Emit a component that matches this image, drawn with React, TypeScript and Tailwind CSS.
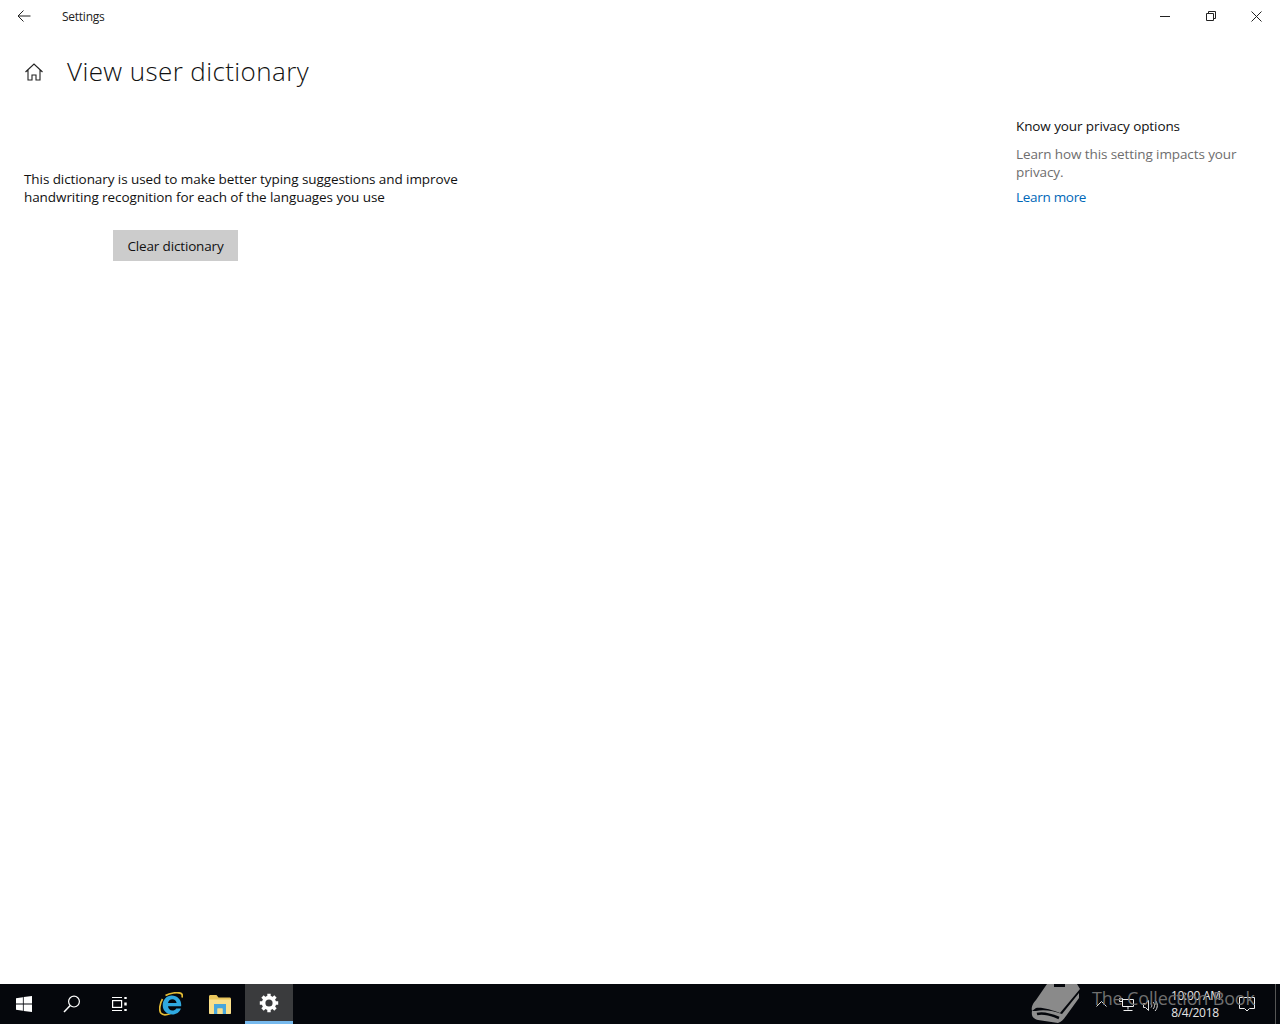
import React from "react";

const font = "font-['Open_Sans','Noto_Sans',sans-serif]";

function Windows() {
  return (
    <svg width="16" height="16" viewBox="0 0 16 16" fill="#fff">
      <path d="M0 2.300 6.900 1.200V7.600H0zM7.700 1.100 16 0V7.600H7.700zM0 8.400H6.900V14.800L0 13.700zM7.700 8.400H16V16L7.700 14.900z" />
    </svg>
  );
}
function Search() {
  return (
    <svg width="18" height="18" viewBox="0 0 18 18" fill="none" stroke="#fff" strokeWidth="1.200">
      <circle cx="11" cy="6.600" r="5.400" />
      <path d="M7.200 10.500 1 17" strokeWidth="1.500" />
    </svg>
  );
}
function TaskView() {
  return (
    <svg width="18" height="16" viewBox="0 0 18 16" fill="none" stroke="#fff" strokeWidth="1.200">
      <path d="M1 1.500H11M1 14.500H11" />
      <rect x="1.600" y="4.600" width="9" height="6.800" />
      <path d="M14.500 1V3M14.500 6.500V9.500M14.500 13V15" strokeWidth="2.400" />
    </svg>
  );
}
function IE() {
  return (
    <svg width="24" height="24" viewBox="0 0 24 24">
      <path d="M3.500 7C.8 11.500 -.2 18 1.800 21c2 2.600 6 2 9.700.5" fill="none" stroke="#e3bb34" strokeWidth="1.700" />
      <path d="M6.500 3.400C11 .9 18 .2 21.300 1.100c1.900.6 2.300 2.400 1.700 4.400" fill="none" stroke="#e3bb34" strokeWidth="1.700" />
      <path
        d="M12.800 3.400c5.400 0 9.400 4 9.400 9.200v1.700H9c.3 2.700 2 4.200 4.300 4.200 1.800 0 3.100-.7 3.900-2.100h4.700c-1.200 3.800-4.600 6-8.600 6-5.500 0-9.600-3.800-9.600-9.200 0-5.700 4-9.800 9.100-9.800zm-3.800 7.500h8.600c-.3-2.300-2-3.700-4.300-3.700-2.200 0-3.900 1.400-4.300 3.700z"
        fill="#2fa9e0"
        fillRule="evenodd"
      />
    </svg>
  );
}
function Folder() {
  return (
    <svg width="22" height="19" viewBox="0 0 22 19">
      <path d="M0 1.500C0 .7.600 0 1.400 0h6.100l2 2.500h11.100c.8 0 1.400.6 1.400 1.400V6H0z" fill="#e9c65c" />
      <path d="M0 4.500h22V18c0 .6-.4 1-1 1H1c-.6 0-1-.4-1-1z" fill="#fbe08a" />
      <path d="M5 9h12v10h-3.500v-5.500h-5V19H5z" fill="#49a7dc" />
      <path d="M8.500 13.500h5V19h-5z" fill="#fbe08a" />
    </svg>
  );
}
function Gear() {
  return (
    <svg width="20" height="20" viewBox="0 0 20 20" fill="none" stroke="#fff">
      <circle cx="10" cy="10" r="5.400" strokeWidth="3.600" />
      <path
        d="M10 .8V4M10 16v3.200M.8 10H4M16 10h3.200M3.500 3.500l2.300 2.300M14.200 14.200l2.300 2.300M3.500 16.500l2.300-2.300M14.200 5.800l2.300-2.300"
        strokeWidth="3.400"
      />
    </svg>
  );
}

function Book() {
  return (
    <svg width="52" height="40" viewBox="0 0 52 40" className="block">
      <path d="M17 0H47L50 5L30 29C22 26 12 23 6 24L2 27C1 23 3 19 6 16Z" fill="#8a8a8a" />
      <path d="M24 1.500H35" stroke="#05070c" strokeWidth="3" />
      <path
        d="M2 27C1 33 4 35 8 36L28 39C31 38 33 36 36 32L49 14V9L32 30C24 27 14 25 6 27Z"
        fill="#8f8f8f"
      />
      <path d="M7 30C14 28 22 31 29 34" fill="none" stroke="#05070c" strokeWidth="2.500" />
    </svg>
  );
}

export default function App() {
  return (
    <div className={`h-screen w-full flex flex-col bg-white text-black overflow-hidden ${font}`}>
      <header className="h-8 flex items-center shrink-0">
        <div className="w-12 flex justify-center">
          <svg width="14" height="12" viewBox="0 0 14 12" fill="none" stroke="#222" strokeWidth="1">
            <path d="M13.500 6H1M6.500.5 1 6l5.500 5.500" />
          </svg>
        </div>
        <span className="ml-[14px] mt-[2px] text-[12px] leading-none text-[#222] tracking-[-0.25px]">Settings</span>
        <div className="ml-auto flex">
          <div className="w-[46px] h-8 flex items-center justify-center">
            <svg width="10" height="10" viewBox="0 0 10 10" stroke="#222"><path d="M0 5.500H10" /></svg>
          </div>
          <div className="w-[46px] h-8 flex items-center justify-center">
            <svg width="10" height="10" viewBox="0 0 10 10" fill="none" stroke="#222">
              <path d="M.5 2.500h7v7h-7zM2.500 2.500V.5h7v7h-2" />
            </svg>
          </div>
          <div className="w-[46px] h-8 pr-[1px] flex items-center justify-center">
            <svg width="11" height="11" viewBox="0 0 11 11" fill="none" stroke="#222">
              <path d="M.5.5l10 10M10.500.5l-10 10" />
            </svg>
          </div>
        </div>
      </header>

      <main className="flex-1 flex justify-between">
        <section className="pl-6">
          <div className="flex items-center h-[48px] mt-4">
            <svg width="20" height="20" viewBox="0 0 20 20" fill="none" stroke="#222" strokeWidth="1.100">
              <path d="M1.500 10 10 2l8.500 8M4 8v10h4v-5h4v5h4V8" />
            </svg>
            <h1 className="ml-[23px] mb-[2px] text-[26px] leading-none font-light text-[#111] tracking-[0.4px]">View user dictionary</h1>
          </div>
          <p className="mt-[74px] w-[450px] text-[13.5px] leading-[18px] text-[#111] tracking-[-0.08px]">
            This dictionary is used to make better typing suggestions and improve handwriting recognition for each of the languages you use
          </p>
          <button className="block ml-[89px] mt-6 pt-[1px] w-[125px] h-[31px] bg-[#cccccc] text-[13.5px] text-[#111] tracking-[-0.15px]">
            Clear dictionary
          </button>
        </section>
        <aside className="w-[264px] pt-[85px]">
          <h2 className="text-[13.5px] leading-[18px] font-normal text-[#111] tracking-[-0.1px]">Know your privacy options</h2>
          <p className="mt-[10px] w-[236px] text-[13.5px] leading-[18px] text-[#6e6e6e] tracking-[-0.1px]">
            Learn how this setting impacts your privacy.
          </p>
          <a className="block mt-[7px] text-[13.5px] leading-[18px] text-[#0067b8] tracking-[-0.3px]">Learn more</a>
        </aside>
      </main>

      <footer className="relative h-10 shrink-0 bg-[#05070c] flex items-center text-white">
        <div className="w-12 h-10 flex items-center justify-center"><Windows /></div>
        <div className="w-12 h-10 flex items-center justify-center"><Search /></div>
        <div className="w-12 h-10 flex items-center justify-center"><TaskView /></div>
        <div className="ml-[2px] w-[49px] h-10 flex items-center justify-center"><IE /></div>
        <div className="w-[49px] h-10 flex items-center justify-center"><Folder /></div>
        <div className="ml-[1px] w-12 h-10 flex items-center justify-center bg-[#3a3b3d] border-b-[3px] border-[#76b9ed]"><Gear /></div>

        <div className="ml-auto flex items-center h-10">
          <svg width="11" height="6" viewBox="0 0 11 6" fill="none" stroke="#ddd" className="mr-[12px]"><path d="M.5 5.500 5.500.5l5 5" /></svg>
          <svg width="15" height="13" viewBox="0 0 15 13" fill="none" stroke="#eee" className="mr-[9px]">
            <path d="M3.500 1.500h11v7h-11zM9 8.500v3M4.500 12.500h9" />
            <path d="M.5.500h3v3h-3z" />
          </svg>
          <svg width="15" height="13" viewBox="0 0 15 13" fill="none" stroke="#ddd" className="mr-[13px] mt-[2px]">
            <path d="M.5 4.500h2L5.500 1.500v10L2.500 8.500h-2zM8 4.500c1 1 1 3 0 4M10 3c2 2 2 5 0 7M12 1c3 3 3 8 0 11" />
          </svg>
          <div className="w-[48px] text-center text-[12px] leading-[17px] text-[#e6e6e6] tracking-[-0.3px] whitespace-nowrap mr-[20px]">
            <div className="-mt-[1px]">10:00 AM</div>
            <div>8/4/2018</div>
          </div>
          <svg width="16" height="16" viewBox="0 0 16 16" fill="none" stroke="#eee" className="mr-[25px]">
            <path d="M.5 1.500h15v11h-5l-2.500 2.500-2.500-2.500h-5z" />
          </svg>
        </div>
        <div className="absolute right-[4px] top-0 h-10 w-px bg-[#555]" />

        <div className="absolute left-[1030px] top-0 flex items-start pointer-events-none">
          <Book />
          <span className="ml-[10px] mt-[5px] text-[18px] leading-none text-[#6f6f6f] whitespace-nowrap tracking-[-0.17px]">The Collection Book</span>
        </div>
      </footer>
    </div>
  );
}
